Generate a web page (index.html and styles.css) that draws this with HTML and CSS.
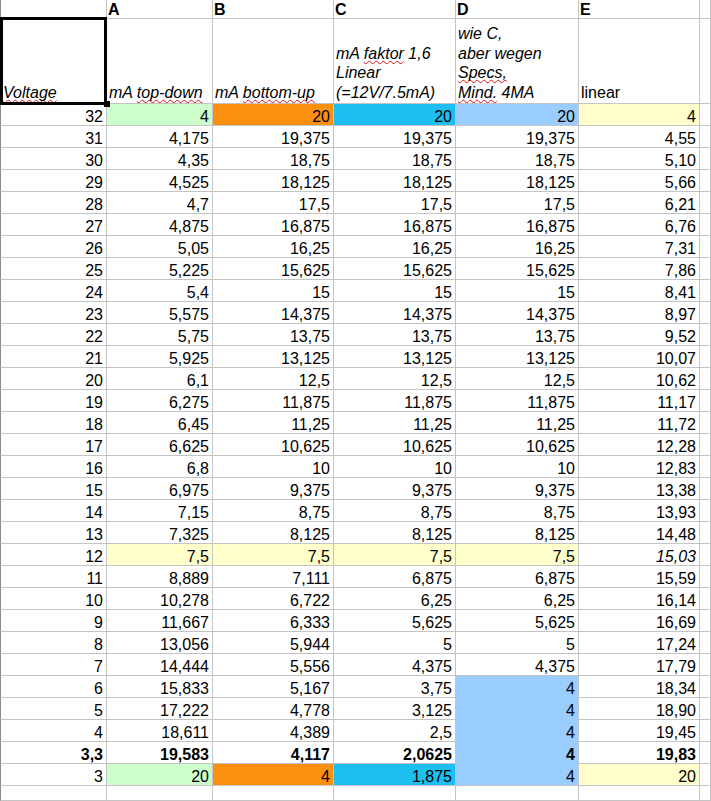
FILE: index.html
```html
<!DOCTYPE html>
<html lang="de">
<head>
<meta charset="utf-8">
<title>Spreadsheet</title>
<link rel="stylesheet" href="styles.css">
</head>
<body>
<div class="sheet">
  <!-- column letter row -->
  <div class="c hd first"></div>
  <div class="c hd">A</div>
  <div class="c hd">B</div>
  <div class="c hd">C</div>
  <div class="c hd">D</div>
  <div class="c hd">E</div>
  <div class="c hd"></div>

  <!-- title row -->
  <div class="c th first sel"><span><span class="sp">Voltage</span></span></div>
  <div class="c th"><span>mA <span class="sp">top-down</span></span></div>
  <div class="c th"><span>mA <span class="sp">bottom-up</span></span></div>
  <div class="c th"><span>mA <span class="sp">faktor</span> 1,6<br>Linear<br>(=12V/7.5mA)</span></div>
  <div class="c th"><span>wie C,<br>aber wegen<br><span class="sp">Specs,</span><br><span class="sp">Mind.</span> 4MA</span></div>
  <div class="c th up"><span>linear</span></div>
  <div class="c th"></div>

  <div class="c n first">32</div><div class="c n g">4</div><div class="c n o">20</div><div class="c n cy">20</div><div class="c n bl">20</div><div class="c n y">4</div><div class="c"></div>
  <div class="c n first">31</div><div class="c n">4,175</div><div class="c n">19,375</div><div class="c n">19,375</div><div class="c n">19,375</div><div class="c n">4,55</div><div class="c"></div>
  <div class="c n first">30</div><div class="c n">4,35</div><div class="c n">18,75</div><div class="c n">18,75</div><div class="c n">18,75</div><div class="c n">5,10</div><div class="c"></div>
  <div class="c n first">29</div><div class="c n">4,525</div><div class="c n">18,125</div><div class="c n">18,125</div><div class="c n">18,125</div><div class="c n">5,66</div><div class="c"></div>
  <div class="c n first">28</div><div class="c n">4,7</div><div class="c n">17,5</div><div class="c n">17,5</div><div class="c n">17,5</div><div class="c n">6,21</div><div class="c"></div>
  <div class="c n first">27</div><div class="c n">4,875</div><div class="c n">16,875</div><div class="c n">16,875</div><div class="c n">16,875</div><div class="c n">6,76</div><div class="c"></div>
  <div class="c n first">26</div><div class="c n">5,05</div><div class="c n">16,25</div><div class="c n">16,25</div><div class="c n">16,25</div><div class="c n">7,31</div><div class="c"></div>
  <div class="c n first">25</div><div class="c n">5,225</div><div class="c n">15,625</div><div class="c n">15,625</div><div class="c n">15,625</div><div class="c n">7,86</div><div class="c"></div>
  <div class="c n first">24</div><div class="c n">5,4</div><div class="c n">15</div><div class="c n">15</div><div class="c n">15</div><div class="c n">8,41</div><div class="c"></div>
  <div class="c n first">23</div><div class="c n">5,575</div><div class="c n">14,375</div><div class="c n">14,375</div><div class="c n">14,375</div><div class="c n">8,97</div><div class="c"></div>
  <div class="c n first">22</div><div class="c n">5,75</div><div class="c n">13,75</div><div class="c n">13,75</div><div class="c n">13,75</div><div class="c n">9,52</div><div class="c"></div>
  <div class="c n first">21</div><div class="c n">5,925</div><div class="c n">13,125</div><div class="c n">13,125</div><div class="c n">13,125</div><div class="c n">10,07</div><div class="c"></div>
  <div class="c n first">20</div><div class="c n">6,1</div><div class="c n">12,5</div><div class="c n">12,5</div><div class="c n">12,5</div><div class="c n">10,62</div><div class="c"></div>
  <div class="c n first">19</div><div class="c n">6,275</div><div class="c n">11,875</div><div class="c n">11,875</div><div class="c n">11,875</div><div class="c n">11,17</div><div class="c"></div>
  <div class="c n first">18</div><div class="c n">6,45</div><div class="c n">11,25</div><div class="c n">11,25</div><div class="c n">11,25</div><div class="c n">11,72</div><div class="c"></div>
  <div class="c n first">17</div><div class="c n">6,625</div><div class="c n">10,625</div><div class="c n">10,625</div><div class="c n">10,625</div><div class="c n">12,28</div><div class="c"></div>
  <div class="c n first">16</div><div class="c n">6,8</div><div class="c n">10</div><div class="c n">10</div><div class="c n">10</div><div class="c n">12,83</div><div class="c"></div>
  <div class="c n first">15</div><div class="c n">6,975</div><div class="c n">9,375</div><div class="c n">9,375</div><div class="c n">9,375</div><div class="c n">13,38</div><div class="c"></div>
  <div class="c n first">14</div><div class="c n">7,15</div><div class="c n">8,75</div><div class="c n">8,75</div><div class="c n">8,75</div><div class="c n">13,93</div><div class="c"></div>
  <div class="c n first">13</div><div class="c n">7,325</div><div class="c n">8,125</div><div class="c n">8,125</div><div class="c n">8,125</div><div class="c n">14,48</div><div class="c"></div>
  <div class="c n first">12</div><div class="c n y">7,5</div><div class="c n y">7,5</div><div class="c n y">7,5</div><div class="c n y">7,5</div><div class="c n i">15,03</div><div class="c"></div>
  <div class="c n first">11</div><div class="c n">8,889</div><div class="c n">7,111</div><div class="c n">6,875</div><div class="c n">6,875</div><div class="c n">15,59</div><div class="c"></div>
  <div class="c n first">10</div><div class="c n">10,278</div><div class="c n">6,722</div><div class="c n">6,25</div><div class="c n">6,25</div><div class="c n">16,14</div><div class="c"></div>
  <div class="c n first">9</div><div class="c n">11,667</div><div class="c n">6,333</div><div class="c n">5,625</div><div class="c n">5,625</div><div class="c n">16,69</div><div class="c"></div>
  <div class="c n first">8</div><div class="c n">13,056</div><div class="c n">5,944</div><div class="c n">5</div><div class="c n">5</div><div class="c n">17,24</div><div class="c"></div>
  <div class="c n first">7</div><div class="c n">14,444</div><div class="c n">5,556</div><div class="c n">4,375</div><div class="c n">4,375</div><div class="c n">17,79</div><div class="c"></div>
  <div class="c n first">6</div><div class="c n">15,833</div><div class="c n">5,167</div><div class="c n">3,75</div><div class="c n bl cont">4</div><div class="c n">18,34</div><div class="c"></div>
  <div class="c n first">5</div><div class="c n">17,222</div><div class="c n">4,778</div><div class="c n">3,125</div><div class="c n bl cont">4</div><div class="c n">18,90</div><div class="c"></div>
  <div class="c n first">4</div><div class="c n">18,611</div><div class="c n">4,389</div><div class="c n">2,5</div><div class="c n bl cont">4</div><div class="c n">19,45</div><div class="c"></div>
  <div class="c n b first">3,3</div><div class="c n b">19,583</div><div class="c n b">4,117</div><div class="c n b">2,0625</div><div class="c n b bl cont">4</div><div class="c n b">19,83</div><div class="c"></div>
  <div class="c n first">3</div><div class="c n g">20</div><div class="c n o">4</div><div class="c n cy">1,875</div><div class="c n bl">4</div><div class="c n y">20</div><div class="c"></div>

  <!-- empty filler row -->
  <div class="c first"></div><div class="c"></div><div class="c"></div><div class="c"></div><div class="c"></div><div class="c"></div><div class="c"></div>
</div>
</body>
</html>
```

FILE: styles.css
```css
html, body {
  margin: 0;
  padding: 0;
  background: #ffffff;
  overflow: hidden;
}

.sheet {
  display: grid;
  grid-template-columns: 107px 106px 121px 122px 123px 121px 1fr;
  grid-template-rows: 19px 85px repeat(31, 22px) 1fr;
  width: 711px;
  height: 801px;
  font-family: "Liberation Sans", Arial, sans-serif;
  font-size: 16px;
  color: #000000;
}

.c {
  box-sizing: border-box;
  border-right: 1px solid #c4c4c4;
  border-bottom: 1px solid #c4c4c4;
  display: flex;
  align-items: flex-end;
  line-height: 17px;
  white-space: nowrap;
  overflow: visible;
  min-width: 0;
}

.first {
  border-left: 1px solid #8c8c8c;
}

/* column letters */
.hd {
  font-weight: bold;
  align-items: flex-start;
  padding: 2px 0 0 1px;
  line-height: 15px;
}

/* title cells */
.th {
  font-style: italic;
  padding: 0 0 1px 2px;
  line-height: 19.5px;
}

.th.up {
  font-style: normal;
}

.sp {
  text-decoration: underline wavy #e01010;
  text-decoration-thickness: 1px;
  text-underline-offset: 1px;
  text-decoration-skip-ink: none;
}

/* selected cell */
.sel {
  position: relative;
}

.sel::after {
  content: "";
  position: absolute;
  left: -1px;
  top: -2px;
  right: -1px;
  bottom: -2px;
  border: 3px solid #000000;
  pointer-events: none;
}

.sel::before {
  content: "";
  position: absolute;
  right: -4px;
  bottom: -4px;
  width: 6px;
  height: 6px;
  background: #000000;
  z-index: 2;
}

/* numbers */
.n {
  justify-content: flex-end;
  padding-right: 3px;
}

.b {
  font-weight: bold;
}

.i {
  font-style: italic;
}

/* fills */
.g  { background: #ccffcc; }
.o  { background: #fb8f10; }
.cy { background: #1cbff0; }
.bl { background: #99ccff; }
.y  { background: #ffffcc; }

.bl.cont {
  border-bottom-color: #99ccff;
}
```
